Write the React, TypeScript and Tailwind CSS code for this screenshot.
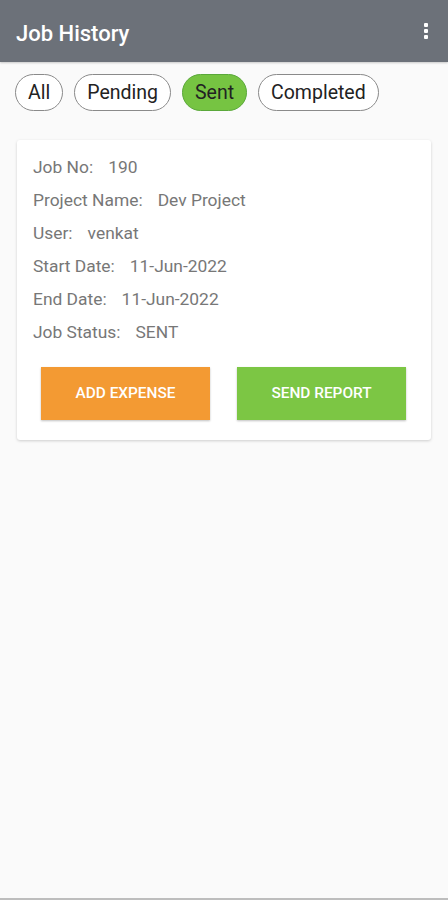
const fields = [
  { label: 'Job No:', value: '190' },
  { label: 'Project Name:', value: 'Dev Project' },
  { label: 'User:', value: 'venkat' },
  { label: 'Start Date:', value: '11-Jun-2022' },
  { label: 'End Date:', value: '11-Jun-2022' },
  { label: 'Job Status:', value: 'SENT' },
];

const tabs = ['All', 'Pending', 'Sent', 'Completed'];

export default function App() {
  return (
    <div className="flex h-[900px] flex-col bg-[#fafafa] font-['Roboto',sans-serif]">
      <div className="flex h-[62px] items-center justify-between bg-[#6c7179] pl-4 pr-[20px] shadow-[0_1px_2px_rgba(0,0,0,0.2)]">
        <h1 className="pt-[4px] text-[22px] font-medium text-white">Job History</h1>
        <div className="flex flex-col gap-[2px]">
          <span className="h-[4px] w-[4px] rounded-[1px] bg-white" />
          <span className="h-[4px] w-[4px] rounded-[1px] bg-white" />
          <span className="h-[4px] w-[4px] rounded-[1px] bg-white" />
        </div>
      </div>

      <div className="flex gap-[11px] px-[15px] pt-[12px]">
        {tabs.map((t) => (
          <button
            key={t}
            className={
              t === 'Sent'
                ? 'h-[37px] rounded-full border border-[#5aa83a] bg-[#76c442] px-[12px] text-[19.5px] text-[#222]'
                : 'h-[37px] rounded-full border border-[#8a8a8a] bg-white px-[12px] text-[19.5px] text-[#222]'
            }
          >
            {t}
          </button>
        ))}
      </div>

      <div className="mx-[17px] mt-[29px] rounded-[3px] bg-white px-4 pb-[20px] pt-[11px] shadow-[0_1px_3px_rgba(0,0,0,0.18)]">
        <div className="flex flex-col">
          {fields.map((f) => (
            <div key={f.label} className="flex h-[33px] items-center gap-[15px] text-[17.4px] text-[#777]">
              <span>{f.label}</span>
              <span>{f.value}</span>
            </div>
          ))}
        </div>
        <div className="mt-[18px] flex gap-[27px] pl-[8px] pr-[9px]">
          <button className="h-[53px] flex-1 bg-[#f39a33] text-[15.4px] font-medium text-white shadow-[0_1px_2px_rgba(0,0,0,0.25)]">
            ADD EXPENSE
          </button>
          <button className="h-[53px] flex-1 bg-[#7cc644] text-[15.4px] font-medium text-white shadow-[0_1px_2px_rgba(0,0,0,0.25)]">
            SEND REPORT
          </button>
        </div>
      </div>

      <div className="flex-1" />
      <div className="h-[2px] bg-[#bdbdbd]" />
    </div>
  );
}
